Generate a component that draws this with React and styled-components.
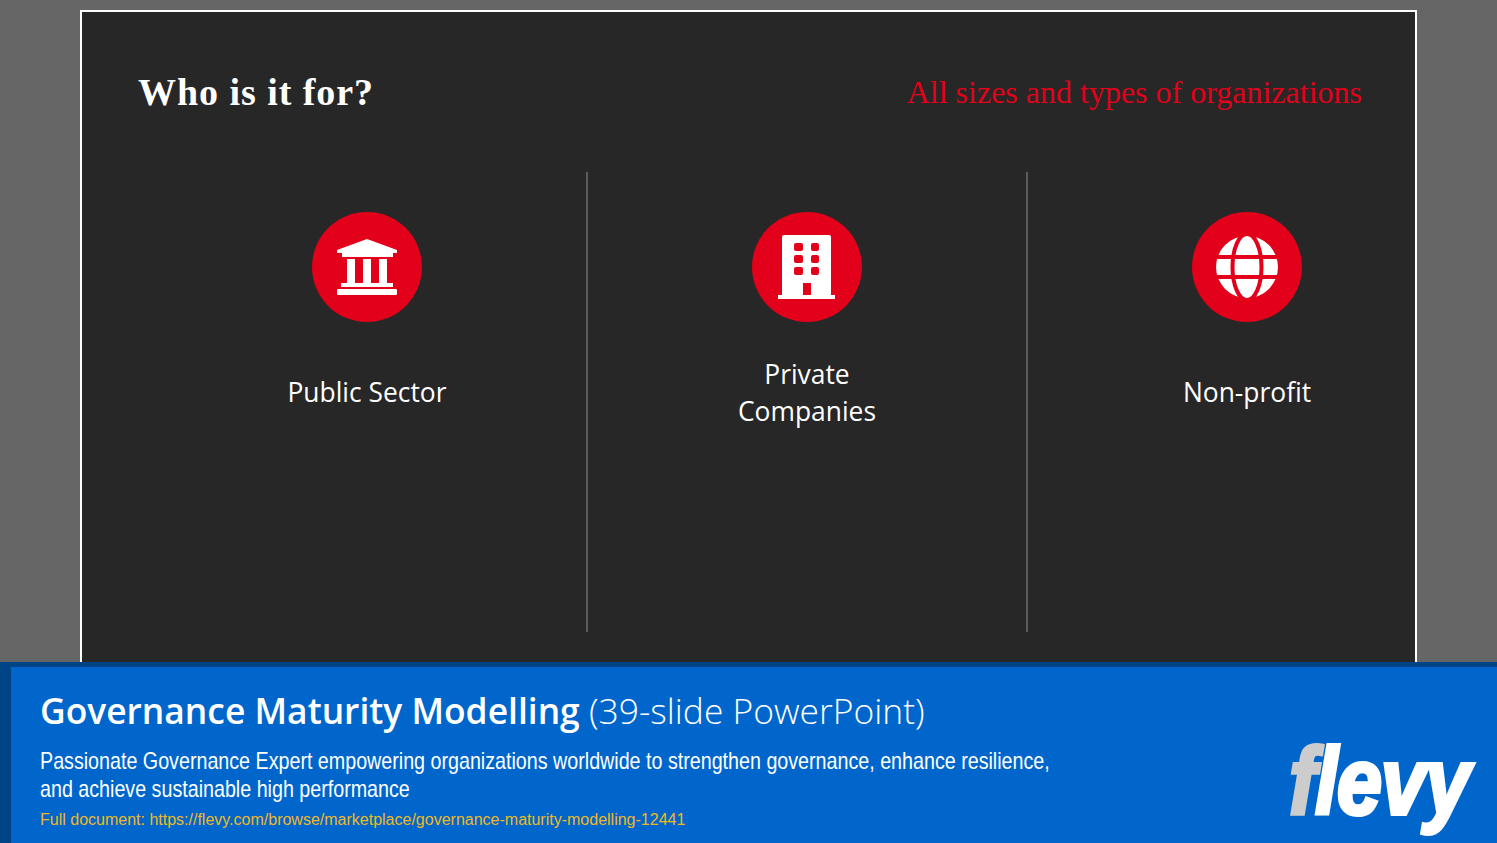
import styled, { createGlobalStyle } from 'styled-components';

const GlobalStyle = createGlobalStyle`
  html, body {
    margin: 0;
    padding: 0;
    background: #666666;
    overflow: hidden;
  }
`;

function BankIcon() {
  return (
    <svg width="110" height="110" viewBox="0 0 110 110" fill="#fff">
      <path d="M55 27 L85 38 V41 H81 V45 H30 V41 H25 V38 Z" />
      <rect x="35" y="47" width="8" height="24" />
      <rect x="51" y="47" width="8" height="24" />
      <rect x="67" y="47" width="8" height="24" />
      <rect x="29" y="71" width="52" height="4" />
      <rect x="25" y="77" width="60" height="6" rx="1" />
    </svg>
  );
}

function BuildingIcon() {
  const windows = [31, 43, 55];
  return (
    <svg width="110" height="110" viewBox="0 0 110 110" fill="#fff">
      <path d="M30 25 Q30 23 32 23 H77 Q79 23 79 25 V83 H83 V87 H26 V83 H30 Z" />
      {windows.map((y) => (
        <g key={y} fill="#e2001a">
          <rect x="42" y={y} width="9" height="8" rx="2" />
          <rect x="59" y={y} width="8" height="8" rx="2" />
        </g>
      ))}
      <rect x="51" y="71" width="8" height="12" fill="#e2001a" />
    </svg>
  );
}

function GlobeIcon() {
  return (
    <svg width="110" height="110" viewBox="0 0 110 110">
      <circle cx="55" cy="55" r="31" fill="#fff" />
      <ellipse cx="55" cy="55" rx="14.5" ry="33" fill="none" stroke="#e2001a" strokeWidth="4" />
      <rect x="20" y="43" width="70" height="4" fill="#e2001a" />
      <rect x="20" y="63" width="70" height="4" fill="#e2001a" />
    </svg>
  );
}

const audiences = [
  { icon: <BankIcon />, lines: ['Public Sector'] },
  { icon: <BuildingIcon />, lines: ['Private', 'Companies'] },
  { icon: <GlobeIcon />, lines: ['Non-profit'] },
];

export default function App() {
  return (
    <Page>
      <GlobalStyle />
      <Stage>
        <Slide>
          <SlideHeader>
            <SlideTitle>Who is it for?</SlideTitle>
            <SlideSubtitle>All sizes and types of organizations</SlideSubtitle>
          </SlideHeader>
          <Columns>
            {audiences.map((item, idx) => (
              <Column key={idx} $divider={idx < audiences.length - 1}>
                <IconCircle>{item.icon}</IconCircle>
                <Label>
                  {item.lines.map((line) => (
                    <span key={line}>{line}</span>
                  ))}
                </Label>
              </Column>
            ))}
          </Columns>
        </Slide>
      </Stage>
      <Banner>
        <BannerText>
          <BannerTitle>
            <strong>Governance Maturity Modelling</strong> <span>(39-slide PowerPoint)</span>
          </BannerTitle>
          <BannerBody>
            Passionate Governance Expert empowering organizations worldwide to strengthen governance, enhance resilience,
            <br />
            and achieve sustainable high performance
          </BannerBody>
          <BannerLink>Full document: https://flevy.com/browse/marketplace/governance-maturity-modelling-12441</BannerLink>
        </BannerText>
        <Logo>
          <LogoF>f</LogoF>levy
        </Logo>
      </Banner>
    </Page>
  );
}

const Page = styled.div`
  width: 1497px;
  height: 843px;
  display: flex;
  flex-direction: column;
  overflow: hidden;
  background: #666666;
`;

const Stage = styled.div`
  height: 662px;
  flex: none;
  padding: 10px 0 0 80px;
  box-sizing: border-box;
  display: flex;
`;

const Slide = styled.section`
  width: 1337px;
  box-sizing: border-box;
  background: #272727;
  border: 2px solid #ffffff;
  border-bottom: 0;
`;

const SlideHeader = styled.header`
  height: 160px;
  box-sizing: border-box;
  padding: 58px 53px 0 56px;
  display: flex;
  justify-content: space-between;
  align-items: flex-start;
`;

const SlideTitle = styled.h1`
  margin: 0;
  font-family: 'Liberation Serif', serif;
  font-size: 38px;
  letter-spacing: 0.95px;
  font-weight: 700;
  color: #ffffff;
`;

const SlideSubtitle = styled.h2`
  margin: 4px 0 0;
  font-family: 'Liberation Serif', serif;
  font-size: 32px;
  font-weight: 400;
  color: #e2001a;
`;

const Columns = styled.div`
  display: grid;
  grid-template-columns: repeat(3, 440px);
  margin-left: 65px;
`;

const Column = styled.div`
  position: relative;
  height: 460px;
  box-sizing: border-box;
  padding-top: 40px;
  display: flex;
  flex-direction: column;
  align-items: center;

  &::after {
    content: '';
    display: ${(props) => (props.$divider ? 'block' : 'none')};
    position: absolute;
    top: 0;
    bottom: 0;
    right: -1px;
    width: 2px;
    background: #5c5c5c;
  }
`;

const IconCircle = styled.div`
  width: 110px;
  height: 110px;
  border-radius: 50%;
  background: #e2001a;
  flex: none;
`;

const Label = styled.div`
  margin-top: 33.5px;
  height: 74px;
  display: flex;
  flex-direction: column;
  justify-content: center;
  align-items: center;
  font-family: 'Open Sans', sans-serif;
  font-size: 26.4px;
  line-height: 37px;
  color: #ffffff;
`;

const Banner = styled.footer`
  flex: 1;
  background: #0066cc;
  border-top: 5px solid #004488;
  border-left: 11px solid #004488;
  box-sizing: border-box;
  padding: 0 20px 0 29px;
  display: flex;
  justify-content: space-between;
`;

const BannerText = styled.div`
  flex: 1;
  min-width: 0;
  display: flex;
  flex-direction: column;
`;

const BannerTitle = styled.div`
  margin-top: 19px;
  font-family: 'Open Sans', sans-serif;
  font-size: 35.4px;
  line-height: 48px;
  color: #ffffff;
  white-space: nowrap;

  strong {
    font-weight: 600;
  }

  span {
    font-weight: 300;
  }
`;

const BannerBody = styled.p`
  margin: 13px 0 0;
  font-family: 'Liberation Sans', sans-serif;
  font-size: 24px;
  line-height: 28px;
  color: #ffffff;
  white-space: nowrap;
  transform: scaleX(0.82);
  transform-origin: left center;
`;

const BannerLink = styled.div`
  margin-top: 7px;
  font-family: 'Liberation Sans', sans-serif;
  font-size: 16px;
  line-height: 20px;
  color: #f0b823;
  white-space: nowrap;
`;

const Logo = styled.div`
  flex: none;
  margin: 70px 8px 0 0;
  height: 90px;
  font-family: 'Liberation Sans', sans-serif;
  font-size: 94px;
  line-height: 90px;
  font-weight: 700;
  font-style: italic;
  letter-spacing: -1px;
  color: #ffffff;
  -webkit-text-stroke: 4px currentColor;
  transform: scaleX(0.86);
  transform-origin: right center;
`;

const LogoF = styled.span`
  color: #cccccc;
`;
